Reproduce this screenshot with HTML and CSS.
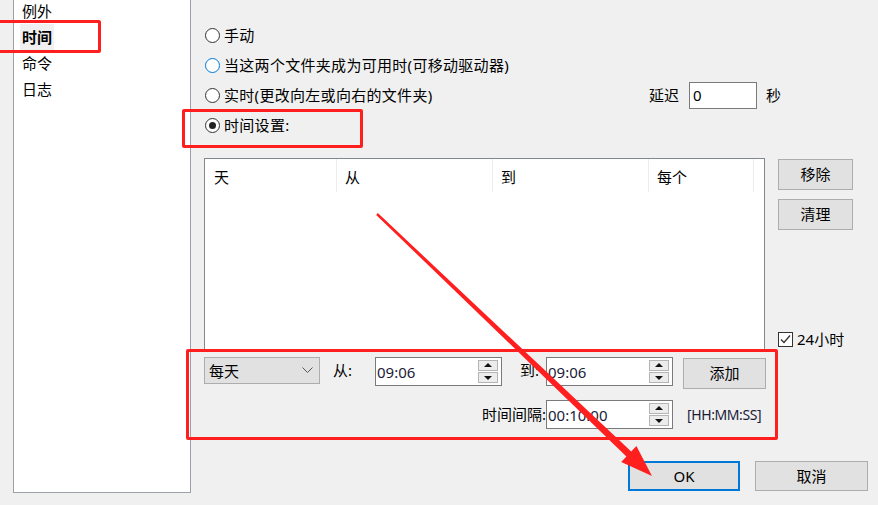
FILE: index.html
```html
<!DOCTYPE html>
<html>
<head>
    <meta charset="utf-8">
    <title>时间</title>
    <link rel="stylesheet" href="styles.css">
</head>
<body>
    <div class="dialog">
        <div class="nav">
            <div class="nav-item">例外</div>
            <div class="nav-item active"><span>时间</span></div>
            <div class="nav-item">命令</div>
            <div class="nav-item">日志</div>
        </div>

        <div class="main">
            <div class="options">
                <div class="radio-row"><span class="radio"></span>手动</div>
                <div class="radio-row"><span class="radio hover"></span>当这两个文件夹成为可用时(可移动驱动器)</div>
                <div class="radio-row">
                    <span class="radio"></span>实时(更改向左或向右的文件夹)
                    <span class="delay">延迟 <span class="text-box">0</span> 秒</span>
                </div>
                <div class="radio-row"><span class="radio checked"></span>时间设置:</div>
            </div>

            <div class="schedule">
                <div class="list">
                    <div class="list-head">
                        <div class="col col-day">天</div>
                        <div class="col col-from">从</div>
                        <div class="col col-to">到</div>
                        <div class="col col-every">每个</div>
                    </div>
                </div>
                <div class="side">
                    <div class="btn">移除</div>
                    <div class="btn btn-clean">清理</div>
                    <div class="check-row">
                        <span class="check">
                            <svg width="13" height="13" viewBox="0 0 13 13"><polyline points="2,6.5 5,9.5 11,2.5" fill="none" stroke="#333" stroke-width="1.3"/></svg>
                        </span>24小时
                    </div>
                </div>
            </div>

            <div class="range">
                <div class="select">每天
                    <svg width="11" height="7" viewBox="0 0 11 7"><polyline points="0.5,0.5 5.5,5.5 10.5,0.5" fill="none" stroke="#555" stroke-width="1"/></svg>
                </div>
                <div class="lbl lbl-from">从:</div>
                <div class="spin"><span class="val">09:06</span><span class="arrows"><i class="up"></i><i class="down"></i></span></div>
                <div class="lbl lbl-to">到:</div>
                <div class="spin"><span class="val">09:06</span><span class="arrows"><i class="up"></i><i class="down"></i></span></div>
                <div class="btn btn-add">添加</div>

                <div class="lbl lbl-interval">时间间隔:</div>
                <div class="spin"><span class="val">00:10:00</span><span class="arrows"><i class="up"></i><i class="down"></i></span></div>
                <div class="fmt">[HH:MM:SS]</div>
            </div>

            <div class="footer">
                <div class="btn btn-ok">OK</div>
                <div class="btn btn-cancel">取消</div>
            </div>
        </div>
    </div>

    <!-- annotation marks drawn on top of the dialog -->
    <div class="mark mark-nav"></div>
    <div class="mark mark-radio"></div>
    <div class="mark mark-range"></div>
    <svg class="arrow" width="878" height="505" viewBox="0 0 878 505">
        <polygon points="377.8,213.1 631.2,451.4 636.4,445.9 652,476 621.2,461.9 626.4,456.4 376.2,214.9" fill="#ff1f1f"/>
    </svg>
</body>
</html>
```

FILE: styles.css
```css
html,
body {
    margin: 0;
    padding: 0;
    overflow: hidden;
}

body {
    width: 878px;
    height: 505px;
    background: #f0f0f0;
    color: #000;
    font: 15px/20px "Noto Sans", "Noto Sans CJK SC", sans-serif;
    position: relative;
}

.dialog {
    display: flex;
    height: 505px;
}

/* left list */
.nav {
    box-sizing: border-box;
    width: 178px;
    height: 503px;
    margin: -10px 0 0 13px;
    padding: 7px 0 0 8px;
    background: #fff;
    border: 1px solid #9ca1a9;
}

.nav-item {
    height: 26px;
    line-height: 26px;
}

.nav-item.active span {
    display: inline-block;
    font-weight: bold;
    background: #f0f0f0;
    padding: 0 2px;
    margin-left: -2px;
}

/* right side */
.main {
    flex: 1;
    padding-left: 13px;
}

.options {
    padding-top: 20px;
}

.radio-row {
    display: flex;
    align-items: center;
    height: 30px;
    padding-right: 97px;
    letter-spacing: 0.3px;
}

.radio {
    box-sizing: border-box;
    width: 15px;
    height: 15px;
    margin: 0 4px 0 1px;
    border: 1px solid #333;
    border-radius: 50%;
    background: #fff;
    position: relative;
}

.radio.hover {
    border-color: #0078d7;
}

.radio.checked::after {
    content: "";
    position: absolute;
    left: 3px;
    top: 3px;
    width: 7px;
    height: 7px;
    border-radius: 50%;
    background: #222;
}

.delay {
    margin-left: auto;
    display: flex;
    align-items: center;
    letter-spacing: 0;
}

.text-box {
    box-sizing: border-box;
    width: 68px;
    height: 27px;
    margin: 0 9px 0 10px;
    padding: 3px 3px;
    background: #fff;
    border: 1px solid #7a7a7a;
    line-height: 19px;
}

/* schedule list */
.schedule {
    display: flex;
    margin-top: 18px;
    height: 194px;
}

.list {
    box-sizing: border-box;
    width: 561px;
    height: 194px;
    background: #fff;
    border: 1px solid #828790;
}

.list-head {
    display: flex;
    height: 34px;
}

.col {
    box-sizing: border-box;
    height: 33px;
    padding: 4px 0 0 8px;
    line-height: 28px;
    border-right: 1px solid #ececec;
}

.col-day {
    width: 132px;
    padding-left: 9px;
}

.col-from,
.col-to {
    width: 156px;
}

.col-every {
    width: 105px;
}

.side {
    display: flex;
    flex-direction: column;
    width: 75px;
    margin-left: 13px;
}

.btn {
    box-sizing: border-box;
    height: 31px;
    line-height: 29px;
    text-align: center;
    background: #e1e1e1;
    border: 1px solid #adadad;
}

.side .btn {
    margin-top: 1px;
}

.side .btn-clean {
    margin-top: 9px;
}

.check-row {
    display: flex;
    align-items: center;
    margin-top: auto;
    margin-bottom: 5px;
    height: 16px;
    white-space: nowrap;
}

.check {
    box-sizing: border-box;
    width: 15px;
    height: 15px;
    margin-right: 4px;
    border: 1px solid #333;
    background: #fff;
    display: flex;
    align-items: center;
    justify-content: center;
}

/* from / to / interval */
.range {
    display: grid;
    grid-template-columns: 116px 55px 127px 44px 127px 10px 83px;
    grid-template-rows: 32px 29px;
    row-gap: 11px;
    margin-top: 5px;
    align-items: start;
}

.select {
    box-sizing: border-box;
    height: 27px;
    padding: 0 6px 0 4px;
    display: flex;
    align-items: center;
    justify-content: space-between;
    background: #e1e1e1;
    border: 1px solid #adadad;
}

.lbl {
    line-height: 27px;
}

.lbl-from {
    padding-left: 13px;
}

.lbl-to {
    padding-left: 18px;
}

.lbl-interval {
    grid-column: 1 / 5;
    text-align: right;
    line-height: 29px;
}

.spin {
    box-sizing: border-box;
    height: 29px;
    display: flex;
    align-items: center;
    justify-content: space-between;
    padding: 0 3px 0 1px;
    background: #fff;
    border: 1px solid #7a7a7a;
}

.val {
    font-size: 15px;
    color: #1b1b3a;
}

.arrows {
    display: flex;
    flex-direction: column;
    gap: 1px;
}

.arrows i {
    box-sizing: border-box;
    width: 20px;
    height: 11px;
    background: #ececec;
    border: 1px solid #b4b4b4;
    position: relative;
}

.arrows i::after {
    content: "";
    position: absolute;
    left: 5px;
    width: 0;
    height: 0;
    border-left: 4px solid transparent;
    border-right: 4px solid transparent;
}

.arrows .up::after {
    top: 2px;
    border-bottom: 4px solid #111;
}

.arrows .down::after {
    top: 3px;
    border-top: 4px solid #111;
}

.btn-add {
    grid-column: 7;
    margin-top: 1px;
}

.fmt {
    grid-column: 6 / 8;
    padding-left: 14px;
    font-size: 14px;
    letter-spacing: -0.4px;
    line-height: 29px;
    white-space: nowrap;
    color: #1b1b3a;
}

/* dialog buttons */
.footer {
    display: flex;
    justify-content: flex-end;
    gap: 15px;
    margin-top: 32px;
    padding-right: 10px;
}

.footer .btn {
    height: 30px;
    line-height: 28px;
}

.btn-ok {
    width: 112px;
    border: 2px solid #0078d7;
    line-height: 26px !important;
}

.btn-cancel {
    width: 113px;
}

/* red annotations */
.mark {
    position: absolute;
    box-sizing: border-box;
    border: 3px solid #ff1f1f;
    border-radius: 2px;
}

.mark-nav {
    left: -10px;
    top: 20px;
    width: 111px;
    height: 33px;
}

.mark-radio {
    left: 182px;
    top: 109px;
    width: 181px;
    height: 39px;
}

.mark-range {
    left: 186px;
    top: 349px;
    width: 592px;
    height: 91px;
}

.arrow {
    position: absolute;
    left: 0;
    top: 0;
}
```
